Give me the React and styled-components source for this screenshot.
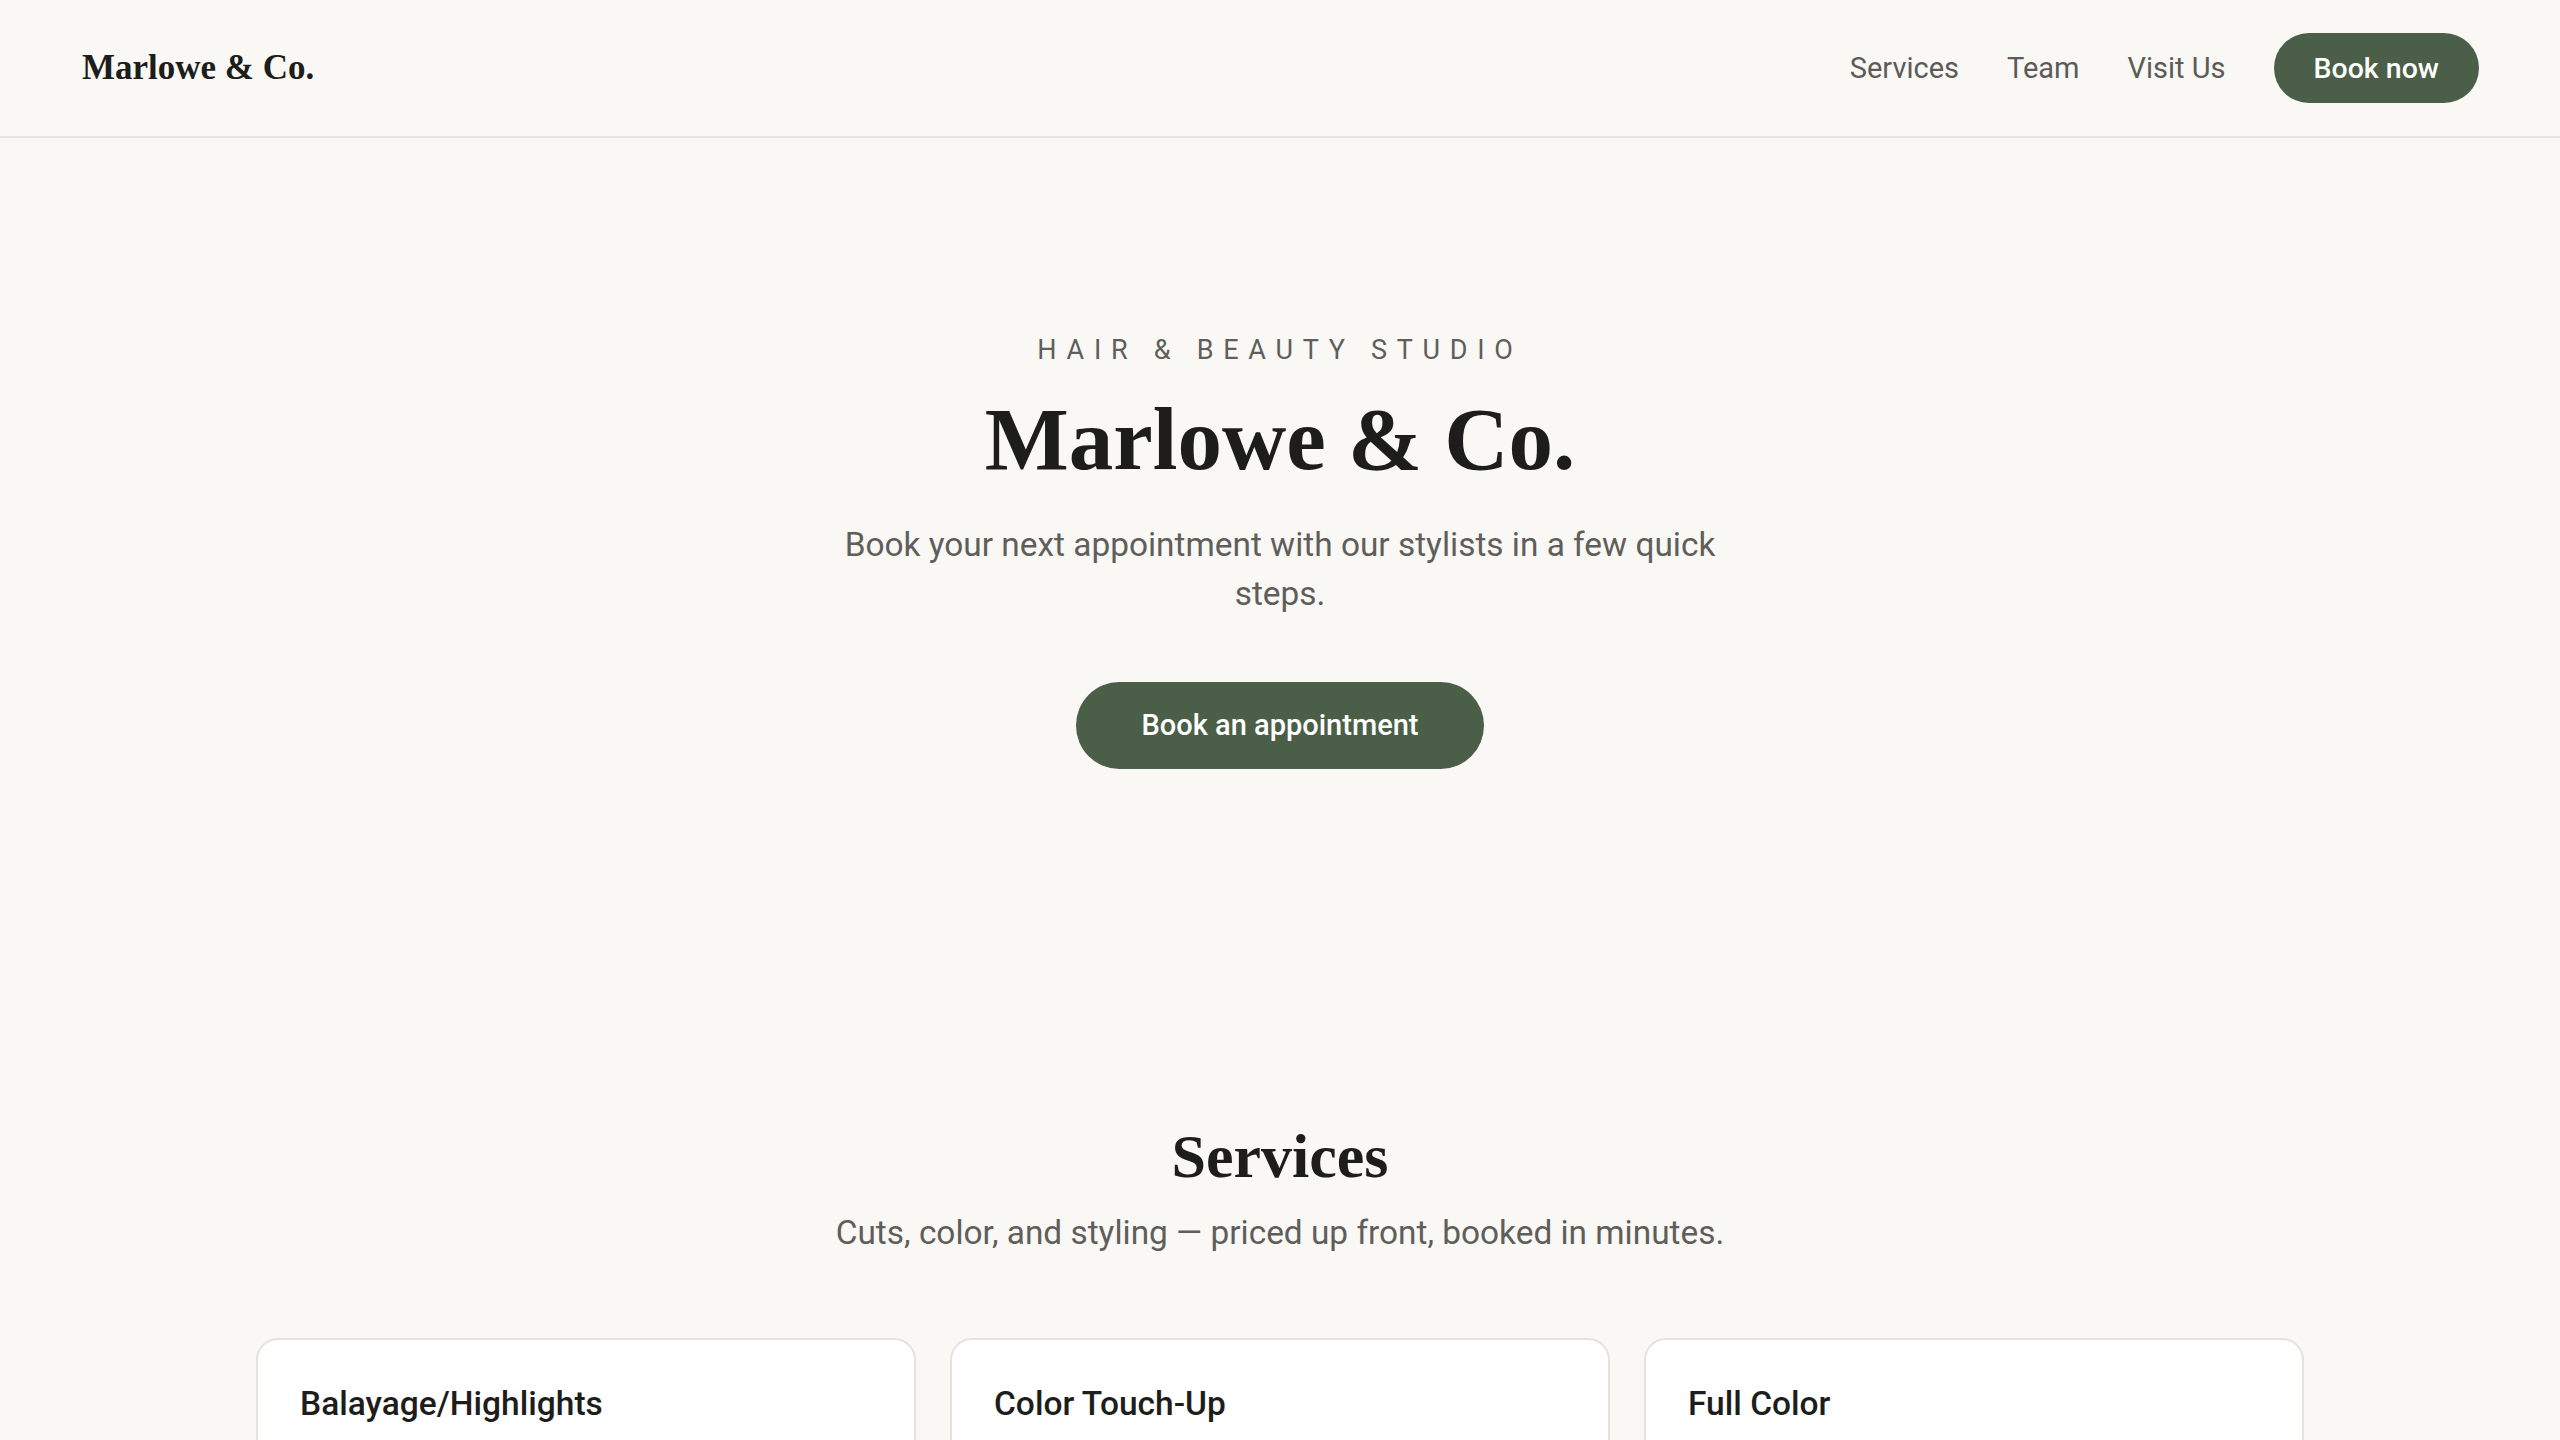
import React from 'react'
import styled, { createGlobalStyle } from 'styled-components'

const Global = createGlobalStyle`
  html, body {
    margin: 0;
    padding: 0;
    background: #f9f8f5;
  }
  body {
    font-family: Roboto, "Liberation Sans", sans-serif;
    color: #1d1d1b;
  }
  * { box-sizing: border-box; }
`

const serif = `"Liberation Serif", "DejaVu Serif", serif`

const Header = styled.header`
  height: 138px;
  padding: 0 81px 0 82px;
  display: flex;
  align-items: center;
  justify-content: space-between;
  border-bottom: 2px solid #e6e4df;
`

const Logo = styled.div`
  font-family: ${serif};
  font-weight: 700;
  font-size: 35px;
  color: #1d1d1b;
`

const Nav = styled.nav`
  display: flex;
  align-items: center;
  gap: 48px;
`

const NavLink = styled.a`
  font-size: 29px;
  color: #5c5b57;
  text-decoration: none;
`

const Pill = styled.button`
  border: none;
  border-radius: 999px;
  background: #4b5e47;
  color: #fff;
  font-family: Roboto, "Liberation Sans", sans-serif;
  font-weight: 500;
  font-size: ${p => (p.$big ? '29px' : '28.5px')};
  height: ${p => (p.$big ? '87px' : '70px')};
  padding: ${p => (p.$big ? '0 65px' : '0 40px')};
  cursor: pointer;
`

const Hero = styled.section`
  display: flex;
  flex-direction: column;
  align-items: center;
  text-align: center;
  padding: 196px 0 0;
`

const Eyebrow = styled.div`
  font-size: 27px;
  line-height: 32px;
  letter-spacing: 0.36em;
  color: #5f5e5a;
`

const Title = styled.h1`
  font-family: ${serif};
  font-weight: 700;
  font-size: 89px;
  line-height: 1.1;
  margin: 25px 0 31px;
  color: #1d1d1b;
`

const Lead = styled.p`
  font-size: 33.4px;
  line-height: 49px;
  max-width: 900px;
  margin: 0 0 64px;
  color: #5f5e5a;
`

const Services = styled.section`
  padding: 350px 0 0;
  display: flex;
  flex-direction: column;
  align-items: center;
`

const SectionTitle = styled.h2`
  font-family: ${serif};
  font-weight: 700;
  font-size: 62px;
  line-height: 1.2;
  margin: 0;
  color: #1d1d1b;
`

const SectionLead = styled.p`
  font-size: 33.4px;
  line-height: 48px;
  margin: 16px 0 81px;
  color: #5f5e5a;
`

const Grid = styled.div`
  width: 2048px;
  display: grid;
  grid-template-columns: repeat(3, 1fr);
  gap: 34px;
`

const Card = styled.article`
  background: #fff;
  border: 2px solid #e4e2dc;
  border-radius: 22px;
  padding: 44px 42px 40px;
  display: flex;
  flex-direction: column;
  gap: 30px;
`

const CardTitle = styled.h3`
  font-size: 33.5px;
  font-weight: 500;
  line-height: 40px;
  margin: 0;
  color: #1d1d1b;
`

const CardText = styled.p`
  font-size: 28px;
  line-height: 42px;
  margin: 0;
  color: #5f5e5a;
`

const Price = styled.div`
  font-size: 29px;
  font-weight: 500;
  color: #4b5e47;
`

const services = [
  { name: 'Balayage/Highlights', text: 'Hand-painted dimension with a soft, natural grow-out.', price: 'from $180' },
  { name: 'Color Touch-Up', text: 'Root refresh to keep your color looking its best.', price: 'from $85' },
  { name: 'Full Color', text: 'All-over color, from subtle shifts to bold changes.', price: 'from $120' },
]

export default function App() {
  return (
    <>
      <Global />
      <Header>
        <Logo>Marlowe &amp; Co.</Logo>
        <Nav>
          <NavLink href="#services">Services</NavLink>
          <NavLink href="#team">Team</NavLink>
          <NavLink href="#visit">Visit Us</NavLink>
          <Pill>Book now</Pill>
        </Nav>
      </Header>
      <Hero>
        <Eyebrow>HAIR &amp; BEAUTY STUDIO</Eyebrow>
        <Title>Marlowe &amp; Co.</Title>
        <Lead>Book your next appointment with our stylists in a few quick steps.</Lead>
        <Pill $big>Book an appointment</Pill>
      </Hero>
      <Services id="services">
        <SectionTitle>Services</SectionTitle>
        <SectionLead>Cuts, color, and styling — priced up front, booked in minutes.</SectionLead>
        <Grid>
          {services.map(s => (
            <Card key={s.name}>
              <CardTitle>{s.name}</CardTitle>
              <CardText>{s.text}</CardText>
              <Price>{s.price}</Price>
            </Card>
          ))}
        </Grid>
      </Services>
    </>
  )
}
